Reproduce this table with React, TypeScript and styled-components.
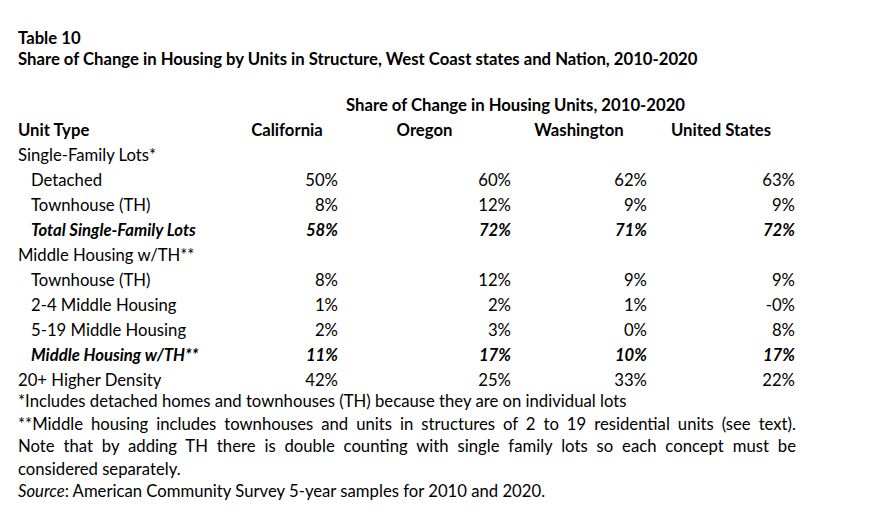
import React from "react";
import styled, { createGlobalStyle } from "styled-components";

const Global = createGlobalStyle`
  html, body { margin: 0; padding: 0; background: #ffffff; }
  body { font-family: Lato, "Open Sans", "Liberation Sans", sans-serif; color: #000; }
`;

const Page = styled.div`
  width: 881px;
  height: 523px;
  box-sizing: border-box;
  padding: 28px 0 0 18px;
  font-size: 16.7px;
`;

const Title = styled.div`
  font-weight: 700;
  line-height: 21px;
`;

const Table = styled.div`
  margin-top: 22px;
  display: grid;
  grid-template-columns: 218px 102px 173px 136px 148px;
  grid-auto-rows: 25px;
  width: 777px;
`;

const Cell = styled.div<{ $align?: "left" | "right" | "center"; $span?: number; $indent?: boolean; $bold?: boolean; $italic?: boolean }>`
  display: flex;
  align-items: center;
  justify-content: ${(p) => (p.$align === "right" ? "flex-end" : p.$align === "center" ? "center" : "flex-start")};
  grid-column: ${(p) => (p.$span ? `span ${p.$span}` : "auto")};
  padding-left: ${(p) => (p.$indent ? "13px" : "0")};
  font-weight: ${(p) => (p.$bold ? 700 : 400)};
  font-style: ${(p) => (p.$italic ? "italic" : "normal")};
  white-space: nowrap;
`;

const Notes = styled.div`
  width: 778px;
  line-height: 22.5px;
  margin-top: -2px;
`;

const Line = styled.p<{ $justify?: boolean }>`
  margin: 0;
  white-space: nowrap;
  text-align: ${(p) => (p.$justify ? "justify" : "left")};
  text-align-last: ${(p) => (p.$justify ? "justify" : "auto")};
  ${(p) => (p.$justify ? "white-space: normal;" : "")}
`;

type Row = { label: string; indent?: boolean; emph?: boolean; vals?: string[] };

const rows: Row[] = [
  { label: "Single-Family Lots*" },
  { label: "Detached", indent: true, vals: ["50%", "60%", "62%", "63%"] },
  { label: "Townhouse (TH)", indent: true, vals: ["8%", "12%", "9%", "9%"] },
  { label: "Total Single-Family Lots", indent: true, emph: true, vals: ["58%", "72%", "71%", "72%"] },
  { label: "Middle Housing w/TH**" },
  { label: "Townhouse (TH)", indent: true, vals: ["8%", "12%", "9%", "9%"] },
  { label: "2-4 Middle Housing", indent: true, vals: ["1%", "2%", "1%", "-0%"] },
  { label: "5-19 Middle Housing", indent: true, vals: ["2%", "3%", "0%", "8%"] },
  { label: "Middle Housing w/TH**", indent: true, emph: true, vals: ["11%", "17%", "10%", "17%"] },
  { label: "20+ Higher Density", vals: ["42%", "25%", "33%", "22%"] },
];

export default function App() {
  return (
    <>
      <Global />
      <Page>
        <Title>Table 10</Title>
        <Title>Share of Change in Housing by Units in Structure, West Coast states and Nation, 2010-2020</Title>
        <Table>
          <Cell />
          <Cell $span={4} $align="center" $bold>
            Share of Change in Housing Units, 2010-2020
          </Cell>
          <Cell $bold>Unit Type</Cell>
          <Cell $bold $align="center">California</Cell>
          <Cell $bold $align="center">Oregon</Cell>
          <Cell $bold $align="center">Washington</Cell>
          <Cell $bold $align="center">United States</Cell>
          {rows.map((r, i) => (
            <React.Fragment key={i}>
              <Cell $indent={r.indent} $bold={r.emph} $italic={r.emph}>
                {r.label}
              </Cell>
              {(r.vals ?? ["", "", "", ""]).map((v, j) => (
                <Cell key={j} $align="right" $bold={r.emph} $italic={r.emph}>
                  {v}
                </Cell>
              ))}
            </React.Fragment>
          ))}
        </Table>
        <Notes>
          <Line>*Includes detached homes and townhouses (TH) because they are on individual lots</Line>
          <Line $justify>
            **Middle housing includes townhouses and units in structures of 2 to 19 residential units (see text).
          </Line>
          <Line $justify>
            Note that by adding TH there is double counting with single family lots so each concept must be
          </Line>
          <Line>considered separately.</Line>
          <Line>
            <i>Source</i>: American Community Survey 5-year samples for 2010 and 2020.
          </Line>
        </Notes>
      </Page>
    </>
  );
}
